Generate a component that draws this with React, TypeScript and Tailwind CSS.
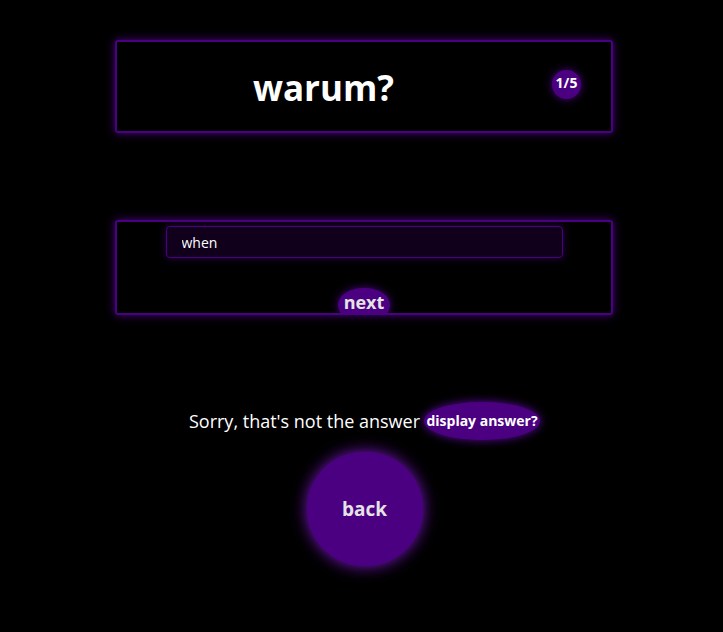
import React, { useState } from 'react';

export default function App() {
  const [answer, setAnswer] = useState('when');

  return (
    <div className="min-h-screen bg-black pt-[40px] font-['Open_Sans','Noto_Sans',sans-serif] text-white">
      {/* question card */}
      <div className="ml-[115px] flex h-[93px] w-[498px] items-center rounded-[3px] border-2 border-[#4b0082] shadow-[0_0_10px_#4b0082]">
        <h1 className="ml-[136px] mt-[2px] text-[35px] font-bold leading-none">warum?</h1>
        <span className="ml-auto mr-[30px] mt-[-4px] flex h-[29px] w-[29px] items-center justify-center rounded-full bg-[#4b0082] pb-[3px] text-[14px] font-bold leading-none shadow-[0_0_8px_#4b0082]">
          1/5
        </span>
      </div>

      {/* answer card */}
      <div className="ml-[115px] mt-[87px] flex h-[95px] w-[498px] flex-col items-center overflow-hidden rounded-[3px] border-2 border-[#4b0082] shadow-[0_0_10px_#4b0082]">
        <input
          value={answer}
          onChange={(e) => setAnswer(e.target.value)}
          className="mt-[4px] h-[32px] w-[397px] shrink-0 rounded-[4px] border border-[#4b0082] bg-[#10001c] px-[15px] text-[14px] text-white outline-none shadow-[0_0_8px_#2d004f]"
        />
        <button className="mt-[30px] flex h-[34px] w-[52px] shrink-0 items-start justify-center rounded-[50%] bg-[#4b0082] pt-[5px] text-[18px] font-bold leading-none text-[#e4e4e4] shadow-[0_0_8px_#4b0082]">
          next
        </button>
      </div>

      {/* feedback */}
      <div className="mt-[87px] flex items-center justify-center pl-[6px]">
        <span className="text-[18px] leading-none">Sorry, that's not the answer</span>
        <button className="ml-[4px] flex h-[38px] w-[116px] items-center justify-center rounded-[50%] bg-[#4b0082] text-[14px] font-bold leading-none text-white shadow-[0_0_10px_#5c0aa0]">
          display answer?
        </button>
      </div>

      <div className="mt-[12px] flex justify-center pl-[6px]">
        <button className="flex h-[114px] w-[116px] items-center justify-center rounded-full bg-[#4b0082] text-[19px] font-bold text-[#e4e4e4] shadow-[0_0_16px_#7a16c4]">
          back
        </button>
      </div>
    </div>
  );
}
